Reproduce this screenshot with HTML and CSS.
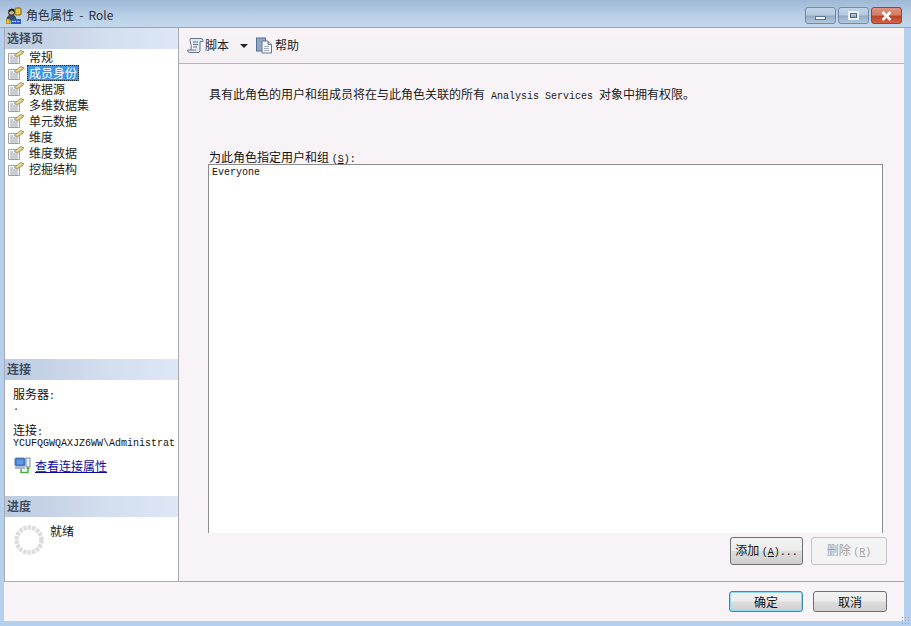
FILE: index.html
```html
<!DOCTYPE html>
<html lang="zh-CN">
<head>
<meta charset="utf-8">
<title>角色属性 - Role</title>
<link rel="stylesheet" href="styles.css">
</head>
<body>
<svg class="defs" width="0" height="0" aria-hidden="true">
  <symbol id="page" viewBox="0 0 16 14">
    <path d="M0.500 3.500h11v10h-11z" fill="#fbfbfb" stroke="#a2a2a2"/>
    <path d="M2 6h3M2 8h8M2 10h8M2 12h8" stroke="#9aa0a8"/>
    <path d="M6 5.500L12.500 0.500 16 1.500 15 3.500 9 7z" fill="#d8c878" stroke="#77744e" stroke-width=".6"/>
    <path d="M9 5l4-3" stroke="#f6eeb8"/>
  </symbol>
</svg>
<div class="window">
  <header class="titlebar">
    <svg class="title-icon" width="16" height="17" viewBox="0 0 16 17">
      <circle cx="5.500" cy="5.500" r="3" fill="#d9a878" stroke="#222" stroke-width="1"/>
      <path d="M3 4.500Q5 1 8.500 4" fill="none" stroke="#1a1a1a" stroke-width="2"/>
      <path d="M1 13q0-5 4.500-5T10 13z" fill="#35506e" stroke="#1d2a3a" stroke-width=".7"/>
      <rect x="9" y="1" width="6" height="7" rx="1" fill="#e9c340" stroke="#7a6418"/>
      <rect x="5" y="12" width="10" height="5" fill="#2f58c8"/>
      <path d="M6 14.500h8" stroke="#fff" stroke-dasharray="1.500 1"/>
      <rect x="0" y="12" width="4" height="5" fill="#e8c020" stroke="#6d5a10" stroke-width=".6"/>
    </svg>
    <span class="title-text">角色属性 - Role</span>
    <div class="caption-btns">
      <div class="cap cap-min"><span class="min-glyph"></span></div>
      <div class="cap cap-max"><span class="max-glyph"></span></div>
      <div class="cap cap-close">
        <svg width="11" height="10" viewBox="0 0 11 10"><path d="M1.500 1l8 8M9.500 1l-8 8" stroke="#fff" stroke-width="2.600"/></svg>
      </div>
    </div>
  </header>

  <div class="client">
    <div class="main">
      <aside class="sidebar">
        <section class="side-pages">
          <h2 class="side-head">选择页</h2>
          <ul class="page-list">
            <li class="page-row"><svg class="page-icon"><use href="#page"/></svg><span class="page-label">常规</span></li>
            <li class="page-row"><svg class="page-icon"><use href="#page"/></svg><span class="page-label is-selected">成员身份</span></li>
            <li class="page-row"><svg class="page-icon"><use href="#page"/></svg><span class="page-label">数据源</span></li>
            <li class="page-row"><svg class="page-icon"><use href="#page"/></svg><span class="page-label">多维数据集</span></li>
            <li class="page-row"><svg class="page-icon"><use href="#page"/></svg><span class="page-label">单元数据</span></li>
            <li class="page-row"><svg class="page-icon"><use href="#page"/></svg><span class="page-label">维度</span></li>
            <li class="page-row"><svg class="page-icon"><use href="#page"/></svg><span class="page-label">维度数据</span></li>
            <li class="page-row"><svg class="page-icon"><use href="#page"/></svg><span class="page-label">挖掘结构</span></li>
          </ul>
        </section>

        <section class="side-conn">
          <h2 class="side-head">连接</h2>
          <div class="conn-body">
            <div class="conn-label">服务器<span class="lat">:</span></div>
            <div class="conn-value lat">.</div>
            <div class="conn-label conn-gap">连接<span class="lat">:</span></div>
            <div class="conn-value lat">YCUFQGWQAXJZ6WW\Administrat</div>
            <div class="conn-link">
              <svg width="17" height="17" viewBox="0 0 17 17">
                <rect x="1" y="1" width="10" height="8" rx="1" fill="#3d6fc4" stroke="#5f7fa8"/>
                <rect x="2.500" y="2.500" width="7" height="5" fill="#5c9ae6"/>
                <rect x="12" y="1" width="4" height="9" fill="#e8edf4" stroke="#7f8ea3"/>
                <rect x="1" y="10" width="10" height="2" fill="#a9b7c9"/>
                <path d="M7 12v3.500h7V11" fill="none" stroke="#4caf3c" stroke-width="1.500"/>
                <path d="M12 12l2-2.500 2 2.500z" fill="#4caf3c"/>
              </svg>
              <a class="link" href="#">查看连接属性</a>
            </div>
          </div>
        </section>

        <section class="side-progress">
          <h2 class="side-head">进度</h2>
          <div class="progress-body">
            <svg class="spinner" width="30" height="30" viewBox="0 0 30 30">
              <circle cx="15" cy="15" r="12.500" fill="none" stroke="#dcdcdc" stroke-width="4.500" stroke-dasharray="3.400 1"/>
            </svg>
            <span class="progress-text">就绪</span>
          </div>
        </section>
      </aside>

      <div class="panel">
        <div class="toolbar">
          <svg class="tool-icon" width="17" height="17" viewBox="0 0 17 17">
            <path d="M4 1.500h10q2 0 2 2v1h-3v9q0 2-2 2H3q-2.500 0-2.500-2.500h8.500" fill="#dfe6ee" stroke="#65758a"/>
            <path d="M4 1.500q-1.500 0-1 2 .5 2 1 4t0 5.500M6 5h5M6 7.500h5M6 10h4" fill="none" stroke="#65758a"/>
          </svg>
          <span class="tool-text tool-text-script">脚本</span>
          <span class="tool-arrow"></span>
          <svg class="tool-icon" width="17" height="17" viewBox="0 0 17 17">
            <rect x="0.500" y="1" width="9" height="13" fill="#8fa8c8" stroke="#56708f"/>
            <path d="M6 4h6l3.500 3.500V16H6z" fill="#f5f7fa" stroke="#66768c"/>
            <path d="M12 4v3.500h3.500" fill="#c8d2de" stroke="#66768c"/>
            <path d="M8 9.500h5M8 11.500h5M8 13.500h5" stroke="#a3afbe"/>
          </svg>
          <span class="tool-text">帮助</span>
        </div>
        <div class="panel-body">
          <p class="intro">具有此角色的用户和组成员将在与此角色关联的所有<span class="lat intro-lat"> Analysis Services </span>对象中拥有权限。</p>
          <label class="members-label">为此角色指定用户和组 <span class="lat">(<u>S</u>):</span></label>
          <div class="members-box lat">Everyone</div>
          <div class="actions">
            <button class="btn btn-add" type="button">添加 <span class="lat">(<u>A</u>)...</span></button>
            <button class="btn btn-remove" type="button" disabled>删除 <span class="lat">(<u>R</u>)</span></button>
          </div>
        </div>
      </div>
    </div>

    <footer class="footer">
      <button class="btn btn-foot btn-default" type="button">确定</button>
      <button class="btn btn-foot" type="button">取消</button>
    </footer>
  </div>
  <div class="grip"></div>
</div>
</body>
</html>
```

FILE: styles.css
```css
* { box-sizing: border-box; }

html, body {
  margin: 0;
  height: 100%;
  overflow: hidden;
}

body {
  font-family: "Noto Sans CJK SC", "Liberation Sans", sans-serif;
  font-size: 12px;
  line-height: 16px;
  color: #111;
}

.defs { position: absolute; }

.lat {
  font-family: "Liberation Mono", "Noto Sans CJK SC", monospace;
  font-size: 10px;
}

.intro-lat { white-space: pre; }

.window {
  position: relative;
  width: 911px;
  height: 626px;
  padding: 0 7px 5px 4px;
  display: flex;
  flex-direction: column;
  background: #b5d0ee;
}

.titlebar {
  height: 28px;
  margin: 0 -7px 0 -4px;
  padding: 7px 9px 0 6px;
  display: flex;
  align-items: flex-start;
  background: linear-gradient(180deg, #9db8d6 0%, #b9cee4 55%, #c4d8ed 100%);
  border-bottom: 1px solid #8ea7c2;
}

.title-icon { flex: none; }

.title-text {
  margin-left: 4px;
  font-family: "Noto Sans CJK SC", "Noto Sans", sans-serif;
  color: #2a3038;
  line-height: 16px;
  word-spacing: 2.500px;
}

.caption-btns {
  margin-left: auto;
  display: flex;
  gap: 2px;
}

.cap {
  width: 31px;
  height: 17px;
  display: flex;
  align-items: center;
  justify-content: center;
  border: 1px solid #6f8aa8;
  border-radius: 3px;
  background: linear-gradient(180deg, #c2d4e7 0%, #b4c8de 48%, #92aac5 52%, #b3c8dd 100%);
}

.min-glyph {
  width: 11px;
  height: 4px;
  margin-top: 5px;
  background: #eef3f8;
  border: 1px solid #5d738c;
}

.max-glyph {
  width: 11px;
  height: 9px;
  border: 2px solid #eef3f8;
  outline: 1px solid #4f6680;
  outline-offset: -3px;
}

.cap-close {
  width: 31px;
  border-color: #8a4a3c;
  background: linear-gradient(180deg, #e0917e 0%, #d47a63 48%, #bc4028 54%, #d0644a 100%);
}

.client {
  flex: 1;
  min-height: 0;
  display: flex;
  flex-direction: column;
  background: #f8f3f6;
}

.main {
  height: 554px;
  display: flex;
  border-bottom: 1px solid #a8a8ae;
}

.sidebar {
  width: 175px;
  flex: none;
  display: flex;
  flex-direction: column;
  background: #fff;
  border-left: 1px solid #a8a8ae;
  border-right: 1px solid #a8a8ae;
}

.side-head {
  margin: 0;
  height: 21px;
  padding: 1px 0 0 2px;
  font-size: 12px;
  font-weight: 700;
  line-height: 18px;
  color: #3e4a5c;
  background: linear-gradient(90deg, #bccbe0 0%, #d2ddee 55%, #dde7f6 100%);
}

.side-pages { flex: 1; min-height: 0; }
.side-conn { height: 137px; }
.side-progress { height: 85px; }

.page-list {
  list-style: none;
  margin: 0;
  padding: 0 0 0 3px;
}

.page-row {
  height: 16px;
  display: flex;
  align-items: center;
}

.page-icon {
  width: 16px;
  height: 14px;
  flex: none;
}

.page-label {
  margin-left: 3px;
  padding: 0 2px;
  height: 16px;
  line-height: 16px;
  color: #1a1a1a;
}

.page-label.is-selected {
  color: #fff;
  background: #3f95e6;
  outline: 1px dotted #1a2a3a;
  outline-offset: -1px;
}

.conn-body { padding: 7px 0 0 8px; }

.conn-label { line-height: 13px; }
.conn-gap { margin-top: 10px; }
.conn-value { line-height: 10px; white-space: nowrap; }

.conn-link {
  margin-top: 8px;
  display: flex;
  align-items: center;
  gap: 4px;
  padding-left: 1px;
}

.link { color: #0a0a9e; text-decoration: underline; }

.progress-body {
  padding: 6px 0 0 9px;
  display: flex;
  align-items: flex-start;
}

.spinner { margin-top: 2px; flex: none; }

.progress-text { margin-left: 6px; }

.panel {
  flex: 1;
  min-width: 0;
  display: flex;
  flex-direction: column;
}

.toolbar {
  height: 36px;
  flex: none;
  padding: 0 0 1px 8px;
  display: flex;
  align-items: center;
  border-bottom: 1px solid #b6b6bc;
  background: linear-gradient(180deg, #f8f4f7, #f3eff3);
}

.tool-text { margin-left: 2px; color: #1f1f1f; }
.tool-text-script { margin-left: 1px; }

.tool-arrow {
  width: 0;
  height: 0;
  margin: 2px 8px 0 11px;
  border-left: 4px solid transparent;
  border-right: 4px solid transparent;
  border-top: 4px solid #222;
}

.panel-body {
  flex: 1;
  min-height: 0;
  padding: 22px 17px 0 29px;
}

.intro {
  margin: 0 0 44px 1px;
  color: #1a1a1a;
  white-space: nowrap;
}

.members-label {
  display: block;
  height: 15px;
  line-height: 15px;
  margin-left: 1px;
  white-space: nowrap;
}

.members-box {
  height: 369px;
  margin-right: 4px;
  padding: 1px 3px;
  line-height: 14px;
  color: #111;
  background: #fff;
  border: 1px solid #8c8c8c;
  border-bottom: 0;
}

.actions {
  margin-top: 4px;
  display: flex;
  justify-content: flex-end;
  gap: 8px;
}

.btn {
  margin: 0;
  padding: 0;
  font-family: "Noto Sans CJK SC", sans-serif;
  font-size: 12px;
  line-height: 16px;
  color: #111;
  border: 1px solid #707070;
  border-radius: 3px;
  background: linear-gradient(180deg, #f3f3f3 0%, #ebebeb 48%, #dddddd 52%, #cfcfcf 100%);
}

.btn-add { width: 73px; height: 28px; }

.btn-remove {
  width: 76px;
  height: 28px;
  color: #a0a0a0;
  border-color: #c4c4c4;
  background: #f4f3f4;
}

.footer {
  flex: 1;
  padding: 9px 17px 0 0;
  display: flex;
  justify-content: flex-end;
  align-items: flex-start;
  gap: 10px;
}

.btn-foot { width: 74px; height: 21px; }

.btn-default {
  border-color: #3c8ca8;
  box-shadow: inset 0 0 0 1px #8fd8ee;
}

.grip {
  position: absolute;
  right: 1px;
  bottom: 1px;
  width: 9px;
  height: 9px;
  background-image: radial-gradient(circle, #8ea2b8 0.8px, transparent 1px);
  background-size: 3px 3px;
}
```
